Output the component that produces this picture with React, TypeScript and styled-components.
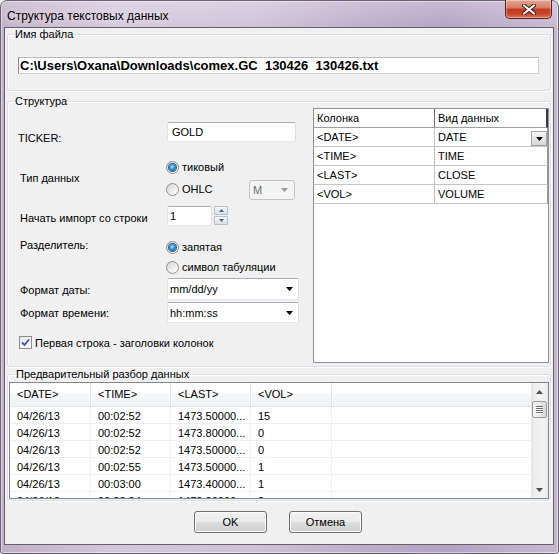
import React from 'react';
import styled, { createGlobalStyle } from 'styled-components';

const FILE_PATH = 'C:\\Users\\Oxana\\Downloads\\comex.GC  130426  130426.txt';

const columnMap = [
  ['<DATE>', 'DATE'],
  ['<TIME>', 'TIME'],
  ['<LAST>', 'CLOSE'],
  ['<VOL>', 'VOLUME'],
];

const previewHead = ['<DATE>', '<TIME>', '<LAST>', '<VOL>', ''];

const previewRows = [
  ['04/26/13', '00:02:52', '1473.50000...', '15', ''],
  ['04/26/13', '00:02:52', '1473.80000...', '0', ''],
  ['04/26/13', '00:02:52', '1473.50000...', '0', ''],
  ['04/26/13', '00:02:55', '1473.50000...', '1', ''],
  ['04/26/13', '00:03:00', '1473.40000...', '1', ''],
  ['04/26/13', '00:03:04', '1473.30000...', '2', ''],
];

const GlobalStyle = createGlobalStyle`
  html, body {
    margin: 0;
    padding: 0;
    background: #ececec;
  }
  body {
    font-family: "Liberation Sans", Arial, sans-serif;
    font-size: 11px;
    color: #000;
  }
  * {
    box-sizing: border-box;
  }
`;

// small triangle used by combo boxes, spinners and scroll bar
const Arrow: React.FC<{ up?: boolean; color?: string; w?: number; h?: number }> = ({
  up,
  color = '#000',
  w = 7,
  h = 4,
}) => (
  <svg width={w} height={h} viewBox={`0 0 ${w} ${h}`} style={{ display: 'block' }}>
    <polygon points={up ? `0,${h} ${w},${h} ${w / 2},0` : `0,0 ${w},0 ${w / 2},${h}`} fill={color} />
  </svg>
);

export default function App() {
  return (
    <>
      <GlobalStyle />
      <Window>
        <TitleBar>
          <Title>Структура текстовых данных</Title>
          <CloseButton aria-label="Закрыть">
            <svg width="14" height="11" viewBox="0 0 14 11">
              <path d="M2 1.5 L12 9.5 M12 1.5 L2 9.5" stroke="#3b1f1a" strokeWidth="4" strokeLinecap="round" />
              <path d="M2 1.5 L12 9.5 M12 1.5 L2 9.5" stroke="#ffffff" strokeWidth="2.2" strokeLinecap="round" />
            </svg>
          </CloseButton>
        </TitleBar>

        <Client>
          <Group $pad="17px 10px 16px 10px">
            <Legend $ml={-4}>Имя файла</Legend>
            <FileName>{FILE_PATH}</FileName>
          </Group>

          <Group $pad="1px 1px 3px 10px" $mt={4}>
            <Legend $ml={-4}>Структура</Legend>
            <StructBody>
              <Form>
                <FormRow $mt={14} $h={20}>
                  <FieldLabel $dy={9} $dx={0}>TICKER:</FieldLabel>
                  <TextBox $w={129}>GOLD</TextBox>
                </FormRow>

                <FormRow $mt={16} $h={42}>
                  <FieldLabel $dy={13}>Тип данных</FieldLabel>
                  <RadioStack $gap={4}>
                    <RadioItem>
                      <RadioDot $on />
                      тиковый
                    </RadioItem>
                    <InlineRow>
                      <RadioItem $w={83}>
                        <RadioDot />
                        OHLC
                      </RadioItem>
                      <DisabledCombo>
                        M
                        <Arrow color="#9b9b9b" />
                      </DisabledCombo>
                    </InlineRow>
                  </RadioStack>
                </FormRow>

                <FormRow $mt={6} $h={20}>
                  <FieldLabel $dy={5}>Начать импорт со строки</FieldLabel>
                  <InlineRow>
                    <TextBox $w={45} $pl={2}>1</TextBox>
                    <Spin>
                      <SpinButton>
                        <Arrow up color="#4b5e86" w={5} h={3} />
                      </SpinButton>
                      <SpinButton>
                        <Arrow color="#4b5e86" w={5} h={3} />
                      </SpinButton>
                    </Spin>
                  </InlineRow>
                </FormRow>

                <FormRow $mt={12} $h={38}>
                  <FieldLabel $dy={0}>Разделитель:</FieldLabel>
                  <RadioStack $gap={2}>
                    <RadioItem>
                      <RadioDot $on />
                      запятая
                    </RadioItem>
                    <RadioItem>
                      <RadioDot />
                      символ табуляции
                    </RadioItem>
                  </RadioStack>
                </FormRow>

                <FormRow $mt={2} $h={22}>
                  <FieldLabel $dy={5}>Формат даты:</FieldLabel>
                  <Combo $h={22}>
                    mm/dd/yy
                    <Arrow />
                  </Combo>
                </FormRow>

                <FormRow $mt={2} $h={21}>
                  <FieldLabel $dy={4}>Формат времени:</FieldLabel>
                  <Combo $h={21}>
                    hh:mm:ss
                    <Arrow />
                  </Combo>
                </FormRow>

                <FormRow $mt={13} $h={14}>
                  <CheckItem>
                    <CheckBox>
                      <svg width="9" height="9" viewBox="0 0 9 9">
                        <path d="M1 4.5 L3.5 7 L8 1.5" fill="none" stroke="#3f55a0" strokeWidth="1.8" />
                      </svg>
                    </CheckBox>
                    Первая строка - заголовки колонок
                  </CheckItem>
                </FormRow>
              </Form>

              <ColTable>
                <ColRow>
                  <ColHead>Колонка</ColHead>
                  <ColHead $last>Вид данных</ColHead>
                </ColRow>
                {columnMap.map(([src, kind], i) => (
                  <ColRow key={src}>
                    <ColCell>{src}</ColCell>
                    <ColCell $last>
                      {kind}
                      {i === 0 && (
                        <CellDrop>
                          <Arrow />
                        </CellDrop>
                      )}
                    </ColCell>
                  </ColRow>
                ))}
              </ColTable>
            </StructBody>
          </Group>

          <Group $pad="2px 1px 1px 1px" $mt={1}>
            <Legend $ml={6}>Предварительный разбор данных</Legend>
            <ListView>
              <ListBody>
                <ListHeader>
                  {previewHead.map((h, i) => (
                    <HeadCell key={i}>{h}</HeadCell>
                  ))}
                </ListHeader>
                {previewRows.map((r, i) => (
                  <ListRow key={i}>
                    {r.map((v, j) => (
                      <ListCell key={j}>{v}</ListCell>
                    ))}
                  </ListRow>
                ))}
              </ListBody>
              <ScrollBar>
                <ScrollArrow>
                  <Arrow up color="#4d4d4d" w={7} h={4} />
                </ScrollArrow>
                <Thumb>
                  <Grip />
                  <Grip />
                  <Grip />
                  <Grip />
                </Thumb>
                <ScrollTrack />
                <ScrollArrow>
                  <Arrow color="#4d4d4d" w={7} h={4} />
                </ScrollArrow>
              </ScrollBar>
            </ListView>
          </Group>

          <ButtonBar>
            <PushButton>OK</PushButton>
            <PushButton>Отмена</PushButton>
          </ButtonBar>
        </Client>
      </Window>
    </>
  );
}

// Styled components
const Window = styled.div`
  width: 559px;
  height: 554px;
  display: flex;
  flex-direction: column;
  padding: 0 4px 8px 3px;
  border: 1px solid #6c6276;
  border-radius: 7px 7px 3px 3px;
  background:
    linear-gradient(180deg, rgba(255, 255, 255, 0.25), rgba(255, 255, 255, 0) 30px),
    linear-gradient(90deg, #c2afc8 0%, #d3c7dc 20%, #cfc2d9 45%, #bdadc9 65%, #b3a2c2 80%, #c7b8d1 100%);
  box-shadow: inset 0 0 0 1px rgba(255, 255, 255, 0.45);
`;

const TitleBar = styled.div`
  height: 26px;
  flex: none;
  display: flex;
  align-items: flex-start;
`;

const Title = styled.div`
  padding: 9px 0 0 3px;
  font-size: 12px;
  line-height: 12px;
  color: #000;
  text-shadow: 0 0 6px rgba(255, 255, 255, 0.9);
`;

const CloseButton = styled.div`
  margin: -1px 2px 0 auto;
  width: 47px;
  height: 19px;
  display: flex;
  align-items: center;
  justify-content: center;
  border: 1px solid #5a1f16;
  border-top: none;
  border-radius: 0 0 5px 5px;
  background: linear-gradient(180deg, #e6a595 0%, #d77e69 42%, #c33b1f 52%, #c6462b 78%, #dd7a5a 100%);
  box-shadow: inset 0 0 0 1px rgba(255, 255, 255, 0.35);
`;

const Client = styled.div`
  flex: 1;
  display: flex;
  flex-direction: column;
  padding: 0 2px;
  background: #f0f0f0;
  border: 1px solid #63606b;
`;

const Group = styled.fieldset<{ $pad: string; $mt?: number }>`
  margin: ${(p) => p.$mt ?? 0}px 0 0 0;
  padding: ${(p) => p.$pad};
  min-width: 0;
  border: 1px solid #d5dfe5;
  border-radius: 3px;
  box-shadow: inset 1px 1px 0 #ffffff, 1px 1px 0 #ffffff;
`;

const Legend = styled.legend<{ $ml: number }>`
  margin-left: ${(p) => p.$ml}px;
  padding: 0 1px;
  font-size: 11px;
  line-height: 12px;
`;

const FileName = styled.div`
  height: 17px;
  margin-right: 1px;
  padding-left: 1px;
  background: #ffffff;
  border: 1px solid #d0d0d0;
  border-left-color: #8a8a8a;
  border-top-color: #b9b9b9;
  font-size: 13px;
  font-weight: bold;
  line-height: 15px;
  white-space: pre;
  overflow: hidden;
`;

const StructBody = styled.div`
  display: flex;
  align-items: flex-start;
`;

const Form = styled.div`
  flex: 1;
  display: flex;
  flex-direction: column;
`;

const FormRow = styled.div<{ $mt: number; $h: number }>`
  margin-top: ${(p) => p.$mt}px;
  height: ${(p) => p.$h}px;
  display: flex;
  align-items: flex-start;
`;

const FieldLabel = styled.div<{ $dy: number; $dx?: number }>`
  flex: none;
  width: 149px;
  padding-top: ${(p) => p.$dy}px;
  padding-left: ${(p) => p.$dx ?? 2}px;
  line-height: 14px;
  white-space: nowrap;
`;

const TextBox = styled.div<{ $w: number; $pl?: number }>`
  width: ${(p) => p.$w}px;
  height: 20px;
  padding-left: ${(p) => p.$pl ?? 4}px;
  line-height: 18px;
  background: #ffffff;
  border: 1px solid;
  border-color: #abadb3 #dbdfe6 #e3e9ef #e2e3ea;
  border-radius: 2px;
`;

const RadioStack = styled.div<{ $gap: number }>`
  display: flex;
  flex-direction: column;
  gap: ${(p) => p.$gap}px;
`;

const InlineRow = styled.div`
  display: flex;
  align-items: flex-start;
`;

const RadioItem = styled.div<{ $w?: number }>`
  height: 18px;
  width: ${(p) => (p.$w ? `${p.$w}px` : 'auto')};
  display: flex;
  align-items: center;
  gap: 3px;
  margin-left: -1px;
  white-space: nowrap;
`;

const RadioDot = styled.span<{ $on?: boolean }>`
  position: relative;
  flex: none;
  width: 13px;
  height: 13px;
  border-radius: 50%;
  border: 1px solid #8e8f8f;
  background: linear-gradient(135deg, #d4d4d4 0%, #f4f4f4 70%, #ffffff 100%);

  &::after {
    content: '';
    position: absolute;
    inset: 2px;
    border-radius: 50%;
    background: ${(p) =>
      p.$on
        ? 'radial-gradient(circle at 45% 40%, #b6e6ff 0%, #2b8fd8 45%, #0c4a8a 100%)'
        : 'linear-gradient(135deg, #dcdcdc, #fafafa)'};
    box-shadow: ${(p) => (p.$on ? '0 0 0 1px #215a8c' : 'none')};
  }
`;

const DisabledCombo = styled.div`
  width: 46px;
  height: 20px;
  padding: 0 6px 0 3px;
  display: flex;
  align-items: center;
  justify-content: space-between;
  color: #6d6d6d;
  background: #f4f4f4;
  border: 1px solid #c3c3c3;
  border-radius: 3px;
`;

const Spin = styled.div`
  margin-left: 2px;
  display: flex;
  flex-direction: column;
  gap: 1px;
`;

const SpinButton = styled.div`
  width: 14px;
  height: 9px;
  display: flex;
  align-items: center;
  justify-content: center;
  border: 1px solid #b4bfd0;
  border-radius: 1px;
  background: linear-gradient(180deg, #f6f8fb 0%, #e6ebf2 50%, #d9e0ea 100%);
`;

const Combo = styled.div<{ $h: number }>`
  width: 132px;
  height: ${(p) => p.$h}px;
  padding: 0 5px 0 2px;
  display: flex;
  align-items: center;
  justify-content: space-between;
  background: #ffffff;
  border: 1px solid;
  border-color: #abadb3 #dbdfe6 #e3e9ef #e2e3ea;
  border-radius: 2px;
`;

const CheckItem = styled.div`
  display: flex;
  align-items: center;
  gap: 3px;
  margin-left: 1px;
  white-space: nowrap;
`;

const CheckBox = styled.span`
  flex: none;
  width: 13px;
  height: 13px;
  display: flex;
  align-items: center;
  justify-content: center;
  border: 1px solid #8e8f8f;
  background: linear-gradient(135deg, #dfe3ea 0%, #f3f5f8 60%, #ffffff 100%);
`;

const ColTable = styled.div`
  flex: none;
  width: 236px;
  height: 255px;
  background: #ffffff;
  border: 1px solid #8f8f98;
`;

const ColRow = styled.div`
  display: grid;
  grid-template-columns: 121px 113px;
  height: 19px;
`;

const ColHead = styled.div<{ $last?: boolean }>`
  padding-left: 3px;
  line-height: 18px;
  border-bottom: 1px solid #a0a0a0;
  border-right: ${(p) => (p.$last ? '2px solid #3c3c3c' : '1px solid #6e6e6e')};
`;

const ColCell = styled.div<{ $last?: boolean }>`
  padding-left: 3px;
  display: flex;
  align-items: flex-end;
  justify-content: space-between;
  line-height: 18px;
  border-bottom: 1px solid #c4c4c4;
  border-right: 1px solid ${(p) => (p.$last ? '#9a9a9a' : '#c4c4c4')};
`;

const CellDrop = styled.div`
  width: 16px;
  height: 15px;
  display: flex;
  align-items: center;
  justify-content: center;
  border: 1px solid #a3a3a3;
  background: linear-gradient(180deg, #f7f7f7 0%, #e6e6e6 50%, #d6d6d6 100%);
`;

const ListView = styled.div`
  height: 117px;
  display: flex;
  overflow: hidden;
  background: #ffffff;
  border: 1px solid #828790;
`;

const ListBody = styled.div`
  flex: 1;
  min-width: 0;
`;

const ListHeader = styled.div`
  display: grid;
  grid-template-columns: 81px 80px 80px 81px 1fr;
  height: 24px;
  border-bottom: 1px solid #e3e5e8;
  background: linear-gradient(180deg, #ffffff 0%, #ffffff 45%, #f6f7f9 46%, #f1f2f4 100%);
`;

const HeadCell = styled.div`
  padding-left: 7px;
  line-height: 23px;
  border-right: 1px solid #e3e5e8;
  box-shadow: 1px 0 0 #ffffff;

  &:last-child {
    border-right: none;
  }
`;

const ListRow = styled.div`
  display: grid;
  grid-template-columns: 81px 80px 80px 81px 1fr;
  height: 17px;
  border-bottom: 1px solid #f0f0f0;
`;

const ListCell = styled.div`
  padding: 2px 0 0 7px;
  line-height: 14px;
  border-right: 1px solid #f0f0f0;
  white-space: nowrap;
  overflow: hidden;

  &:last-child {
    border-right: none;
  }
`;

const ScrollBar = styled.div`
  flex: none;
  width: 17px;
  display: flex;
  flex-direction: column;
  background: linear-gradient(90deg, #e3e3e3 0%, #eeeeee 20%, #f2f2f2 80%, #e9e9e9 100%);
`;

const ScrollArrow = styled.div`
  height: 17px;
  flex: none;
  display: flex;
  align-items: center;
  justify-content: center;
`;

const Thumb = styled.div`
  height: 17px;
  margin: 1px 1px 0 1px;
  flex: none;
  display: flex;
  flex-direction: column;
  align-items: center;
  justify-content: center;
  gap: 1px;
  border: 1px solid #9a9a9a;
  border-radius: 2px;
  background: linear-gradient(90deg, #f3f3f3 0%, #e8e8e8 50%, #d9d9d9 100%);
`;

const Grip = styled.span`
  width: 7px;
  height: 1px;
  background: #6f6f6f;
  box-shadow: 0 1px 0 #ffffff;
`;

const ScrollTrack = styled.div`
  flex: 1;
`;

const ButtonBar = styled.div`
  margin-top: 10px;
  display: flex;
  justify-content: center;
  gap: 22px;
  padding-right: 2px;
`;

const PushButton = styled.div`
  width: 73px;
  height: 22px;
  display: flex;
  align-items: center;
  justify-content: center;
  border: 1px solid #707070;
  border-radius: 3px;
  background: linear-gradient(180deg, #f2f2f2 0%, #ebebeb 48%, #dddddd 52%, #cfcfcf 100%);
  box-shadow: inset 0 0 0 1px #fbfbfb;
`;
